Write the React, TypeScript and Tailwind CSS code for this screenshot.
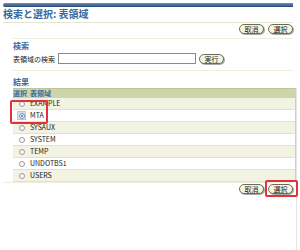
import React from 'react';

const font = { fontFamily: '"Noto Sans CJK JP", "Liberation Sans", sans-serif' };

function Btn({ label }: { label: string }) {
    return (
        <button className="h-[10px] w-[25px] rounded-full border border-[#6b6b5b] bg-[#f5f5e1] text-[7px] leading-[8px] text-[#222] shadow-[1px_1px_0_#aaa] flex items-center justify-center">
            {label}
        </button>
    );
}

export default function App() {
    const rows = ['EXAMPLE', 'MTA', 'SYSAUX', 'SYSTEM', 'TEMP', 'UNDOTBS1', 'USERS'];
    return (
        <div className="w-[300px] h-[250px] bg-white relative overflow-hidden" style={font}>
            <div className="pt-[3px] pl-[3px] pr-[7px]">
                <div className="h-[4px] rounded-l-full bg-gradient-to-b from-[#6f8fb5] to-[#24497a]" />
                <h1 className="mt-[1px] h-[12px] text-[10px] leading-[12px] font-bold text-[#3a6aa0] whitespace-nowrap">検索と選択: 表領域</h1>
                <div className="mt-[2px] h-px bg-[#e6e6cf]" />
                <div className="flex justify-end gap-[4px] mt-[1px] h-[10px]">
                    <Btn label="取消" />
                    <Btn label="選択" />
                </div>
            </div>

            <div className="pl-[13px] pr-[7px]">
                <div className="mt-[4px] h-px bg-[#eeeedd]" />
                <h2 className="mt-[2px] h-[10px] text-[8px] leading-[10px] font-bold text-[#3a6aa0]">検索</h2>
                <div className="flex items-center mt-[2px] h-[11px]">
                    <span className="text-[7px] leading-[10px] text-[#222] w-[45px] whitespace-nowrap">表領域の検索</span>
                    <div className="w-[138px] h-[11px] border border-[#8a8a8a] bg-white" />
                    <div className="ml-[3px]"><Btn label="実行" /></div>
                </div>
                <div className="mt-[6px] h-px bg-[#eeeedd]" />
                <h2 className="mt-[6px] h-[10px] text-[8px] leading-[10px] font-bold text-[#3a6aa0]">結果</h2>
            </div>

            <div className="ml-[13px] mr-[4px] mt-[1px] border-r border-[#cfcfbf]">
                <div className="flex h-[10px] items-center bg-[#cdd5ab] border-t border-[#bcc497] text-[7px] leading-[9px] font-bold text-[#3a6aa0]">
                    <span className="w-[17px]">選択</span>
                    <span>表領域</span>
                </div>
                {rows.map((r, i) => (
                    <div
                        key={r}
                        className={`flex h-[12px] items-center border-b border-[#e2e2cc] ${i % 2 === 0 ? 'bg-[#f3f3e3]' : 'bg-white'}`}
                    >
                        <span className="w-[17px] flex justify-center">
                            {i === 1 ? (
                                <span className="w-[9px] h-[9px] bg-[#d6e2ee] border border-[#b7c7d8] flex items-center justify-center">
                                    <span className="w-[6px] h-[6px] rounded-full border border-[#6d8fb3] bg-white flex items-center justify-center">
                                        <span className="w-[2px] h-[2px] rounded-full bg-[#3566a8]" />
                                    </span>
                                </span>
                            ) : (
                                <span className="w-[6px] h-[6px] rounded-full border border-[#999] bg-white" />
                            )}
                        </span>
                        <span className="text-[7px] leading-[9px] text-[#222]">{r}</span>
                    </div>
                ))}
            </div>

            <div className="pl-[3px] pr-[7px]">
                <div className="h-px bg-[#eeeedd]" />
                <div className="flex justify-end gap-[4px] mt-[1px] h-[10px]">
                    <Btn label="取消" />
                    <Btn label="選択" />
                </div>
            </div>

            <div className="absolute left-[296px] top-[88px] bottom-0 border-l border-[#e3e3e3]" />
            <div className="absolute left-[10px] top-[100px] w-[38px] h-[24px] border-2 border-[#e2313a] rounded-[2px]" />
            <div className="absolute left-[265px] top-[180px] w-[33px] h-[17px] border-2 border-[#e2313a] rounded-[2px]" />
        </div>
    );
}
